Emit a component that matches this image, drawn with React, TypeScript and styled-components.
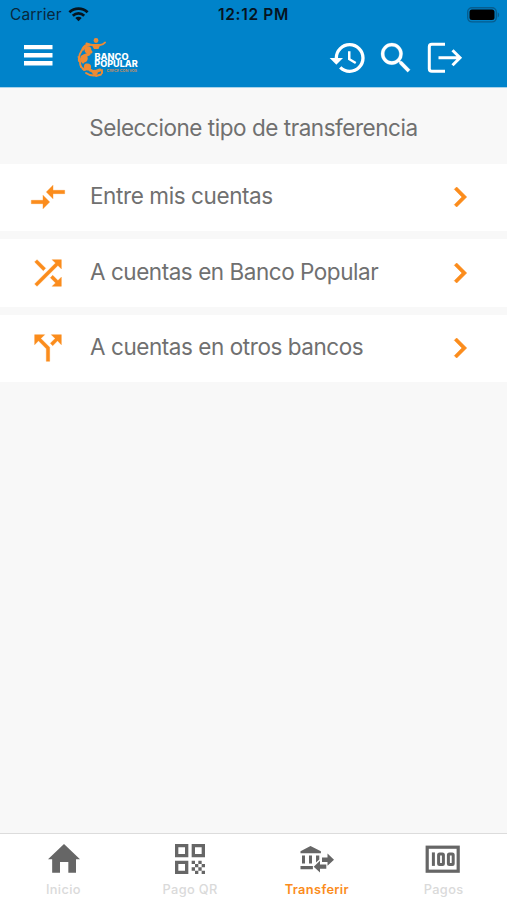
import React from "react";
import styled, { createGlobalStyle } from "styled-components";

const GlobalStyle = createGlobalStyle`
  * { box-sizing: border-box; }
  html, body { margin: 0; padding: 0; }
  body { background: #f8f8f8; font-family: Inter, "Liberation Sans", sans-serif; }
`;

const ORANGE = "#fb8c1c";

const Screen = styled.div`
  display: flex;
  flex-direction: column;
  width: 507px;
  height: 900px;
  overflow: hidden;
  background: #f8f8f8;
`;

const StatusBar = styled.div`
  display: grid;
  grid-template-columns: 1fr auto 1fr;
  align-items: center;
  height: 29px;
  padding: 0 7px 0 10px;
  background: #0083ca;
  color: #06141f;
`;

const Carrier = styled.div`
  display: flex;
  align-items: center;
  gap: 6px;
  font-size: 15.5px;
  letter-spacing: 0.13px;
  color: #08283d;
`;

const Clock = styled.div`
  margin-right: 3px;
  font-size: 15.5px;
  font-weight: 600;
  letter-spacing: 0.65px;
`;

const BatterySlot = styled.div`
  display: flex;
  justify-content: flex-end;
`;

const Header = styled.header`
  display: flex;
  align-items: center;
  height: 59px;
  padding: 0 44px 0 24px;
  background: #0083ca;
  border-bottom: 1px solid #a9d3ea;
  color: #fff;
`;

const Glyph = styled.svg`
  display: block;
  flex: none;
`;

const MenuButton = styled.div`
  padding-bottom: 6px;
`;

const Brand = styled.div`
  display: flex;
  margin-left: 23.5px;
`;

const Actions = styled.div`
  display: flex;
  align-items: center;
  gap: 8px;
  margin-left: auto;
  svg:last-child { margin-left: 3px; }
`;

const Title = styled.h1`
  margin: 0;
  height: 75.5px;
  padding-top: 5px;
  line-height: 70px;
  text-align: center;
  font-size: 22.5px;
  font-weight: 400;
  letter-spacing: -0.46px;
  color: #707070;
  white-space: nowrap;
`;

const List = styled.div`
  display: flex;
  flex-direction: column;
  gap: 8px;
`;

const Row = styled.button`
  display: flex;
  align-items: center;
  height: 67.5px;
  padding: 0 27px 0 28px;
  border: 0;
  background: #fff;
  color: ${ORANGE};
  font-family: inherit;
`;

const RowLabel = styled.span<{ $spacing: number }>`
  flex: 1;
  margin-left: 22px;
  padding-bottom: 2px;
  text-align: left;
  font-size: 22.5px;
  line-height: 28px;
  letter-spacing: ${(p) => p.$spacing}px;
  color: #707070;
  white-space: nowrap;
`;

const TabBar = styled.nav`
  display: grid;
  grid-template-columns: repeat(4, 1fr);
  height: 67px;
  margin-top: auto;
  border-top: 1.5px solid #dcdcdc;
  background: #fff;
`;

const Tab = styled.div<{ $active?: boolean }>`
  display: flex;
  flex-direction: column;
  align-items: center;
  padding-top: 5px;
  color: #666;
  span {
    margin-top: 2px;
    font-size: 12.8px;
    line-height: 18px;
    font-weight: ${(p) => (p.$active ? 600 : 500)};
    letter-spacing: 0.35px;
    color: ${(p) => (p.$active ? ORANGE : "#dadada")};
  }
`;

const Icon = ({ d, size = 40, weight = 0 }: { d: string; size?: number; weight?: number }) => (
  <Glyph
    width={size}
    height={size}
    viewBox="0 0 24 24"
    fill="currentColor"
    stroke={weight ? "currentColor" : "none"}
    strokeWidth={weight}
  >
    <path d={d} />
  </Glyph>
);

const paths = {
  history:
    "M13 3a9 9 0 0 0-9 9H1l3.89 3.89.07.14L9 12H6c0-3.87 3.13-7 7-7s7 3.13 7 7-3.13 7-7 7c-1.93 0-3.68-.79-4.94-2.06l-1.42 1.42A8.954 8.954 0 0 0 13 21a9 9 0 0 0 0-18zm-1 5v5l4.28 2.54.72-1.21-3.5-2.08V8H12z",
  search:
    "M15.5 14h-.79l-.28-.27A6.471 6.471 0 0 0 16 9.5 6.5 6.5 0 1 0 9.5 16c1.61 0 3.09-.59 4.23-1.57l.27.28v.79l5 4.99L20.49 19l-4.99-5zm-6 0C7.01 14 5 11.99 5 9.5S7.01 5 9.5 5 14 7.01 14 9.5 11.99 14 9.5 14z",
  compare:
    "M9.01 14H2v2h7.01v3L13 15l-3.99-4v3zm5.98-1v-3H22V8h-7.01V5L11 9l3.99 4z",
  shuffle:
    "M10.59 9.17 5.41 4 4 5.41l5.17 5.17 1.42-1.41zM14.5 4l2.04 2.04L4 18.59 5.41 20 17.96 7.46 20 9.5V4h-5.5zm.33 9.41-1.41 1.41 3.13 3.13L14.5 20H20v-5.5l-2.04 2.04-3.13-3.13z",
  split:
    "M14 4l2.29 2.29-2.88 2.88 1.42 1.42 2.88-2.88L20 10V4h-6zm-4 0H4v6l2.29-2.29 4.71 4.7V20h2v-8.41l-5.29-5.3L10 4z",
  chevron: "M10 6 8.59 7.41 13.17 12l-4.58 4.59L10 18l6-6z",
  home: "M10.2 20.2v-6.4h5v6.4h4.6v-8h2.4L12.6 3 3 12.2h2.5v8z",
  qr: "M3 11h8V3H3v8zm2-6h4v4H5V5zM3 21h8v-8H3v8zm2-6h4v4H5v-4zM13 3v8h8V3h-8zm6 6h-4V5h4v4zM19 19h2v2h-2zM13 13h2v2h-2zM15 15h2v2h-2zM13 17h2v2h-2zM15 19h2v2h-2zM17 17h2v2h-2zM17 13h2v2h-2zM19 15h2v2h-2z",
};

const WifiIcon = () => (
  <Glyph width="21" height="15" viewBox="0 0 21 15" fill="none" stroke="#06141f" strokeWidth="2.8">
    <path d="M1.4 5.2C6.6.4 14.4.4 19.6 5.2M4.8 8.7c3.3-3 8.1-3 11.4 0" />
    <path d="m10.5 14.2-3.2-3.3c1.9-1.6 4.5-1.6 6.4 0z" fill="#06141f" stroke="none" />
  </Glyph>
);

const BatteryIcon = () => (
  <Glyph width="33" height="16" viewBox="0 0 33 16">
    <rect x=".7" y=".7" width="28.6" height="14.2" rx="4.3" fill="none" stroke="#075d8e" strokeWidth="1.4" />
    <rect x="2.5" y="2.6" width="25" height="10.5" rx="2.5" fill="#000" />
    <path d="M30.7 5.2c1.9.7 1.9 4.5 0 5.2z" fill="#075d8e" />
  </Glyph>
);

const MenuIcon = () => (
  <Glyph width="29" height="21" viewBox="0 0 29 21" fill="#fff">
    <path d="M0 0h28.5v4.3H0zM0 8h28.5v4.4H0zM0 16h28.5v4.4H0z" />
  </Glyph>
);

const LogoutIcon = () => (
  <Glyph width="36" height="32" viewBox="0 0 36 32" fill="none" stroke="#fff" strokeWidth="3">
    <path d="M18 2.2H4.8Q2.3 2.2 2.3 4.7v22Q2.3 29.2 4.8 29.2H18M11.5 15.7h21M25.5 8.2l7.5 7.5-7.5 7.5" />
  </Glyph>
);

const BrandLogo = () => (
  <Glyph width="64" height="42" viewBox="0 0 64 42">
    <g fill="none" stroke="#ef8b34" strokeLinecap="round">
      <path d="M9.5 6.5q3 1.5 6 1.5h7.500q3 0 5-2.500" strokeWidth="2" />
      <path d="M5 13q-4 6-3 11M1.500 20l3 4M3 25q0 5 4 8M4 30l4 3M9 36q4 3 9 2.500M19 39l5-1.500M25 36v-3" strokeWidth="1.9" />
      <path d="M12 8q-4 0-6 4M11 12l3 3M7 19l5-2M7 20l-1 5M9 28l3 3M13 33l4 2M20 34l3-1" strokeWidth="3" />
    </g>
    <g fill="#ef8b34">
      <circle cx="19" cy="3.500" r="2.400" />
      <path d="M14.500 7.500h9l-2 4.500h-4.500z" />
      <circle cx="11" cy="13" r="3.400" />
      <circle cx="7" cy="21.500" r="3.700" />
      <circle cx="10.500" cy="30" r="3.600" />
      <circle cx="18" cy="35.500" r="2.700" />
    </g>
    <g fontFamily="Inter, sans-serif" fontWeight="800" fill="#fff">
      <text x="17.500" y="23.200" fontSize="8.600" textLength="34" lengthAdjust="spacingAndGlyphs">BANCO</text>
      <text x="17.300" y="30.200" fontSize="8.600" textLength="43.500" lengthAdjust="spacingAndGlyphs">POPULAR</text>
      <text x="29.500" y="35" fontSize="3.400" fontWeight="600" fill="#d59055" textLength="30.500" lengthAdjust="spacingAndGlyphs">CRECE CON VOS</text>
    </g>
  </Glyph>
);

const BankTransferIcon = () => (
  <Glyph width="40" height="40" viewBox="0 0 40 40" fill="currentColor">
    <path d="M13.5 7 3.5 12.3v2h20.4v-2zM5 16.5h3v8H5zM12 16.5h3v8h-3zM19 16.5h3.3v4L19 23.5zM3.5 27h12.4v3.2H3.5z" />
    <path d="M30.5 14.5 37 20.7l-6.5 6v-3.8H25v-4.4h5.5zM23 21.8v3.8h6.3v4.2H23v3.7l-6.3-5.8z" />
  </Glyph>
);

const CashIcon = () => (
  <Glyph width="40" height="40" viewBox="0 0 40 40" fill="none" stroke="currentColor">
    <rect x="3.2" y="8.200" width="31" height="24" strokeWidth="3.2" />
    <path d="M9.4 13.4v13.5" strokeWidth="3" />
    <rect x="14.6" y="14.9" width="4.8" height="10.6" rx="1" strokeWidth="3" />
    <rect x="24.400" y="14.9" width="4.8" height="10.6" rx="1" strokeWidth="3" />
  </Glyph>
);

const options = [
  { label: "Entre mis cuentas", icon: paths.compare, spacing: -0.4 },
  { label: "A cuentas en Banco Popular", icon: paths.shuffle, spacing: -0.46 },
  { label: "A cuentas en otros bancos", icon: paths.split, spacing: -0.44 },
];

const tabs = [
  { label: "Inicio", icon: <Icon d={paths.home} /> },
  { label: "Pago QR", icon: <Icon d={paths.qr} /> },
  { label: "Transferir", icon: <BankTransferIcon />, active: true },
  { label: "Pagos", icon: <CashIcon /> },
];

export default function App() {
  return (
    <Screen>
      <GlobalStyle />
      <StatusBar>
        <Carrier>
          Carrier
          <WifiIcon />
        </Carrier>
        <Clock>12:12 PM</Clock>
        <BatterySlot>
          <BatteryIcon />
        </BatterySlot>
      </StatusBar>
      <Header>
        <MenuButton>
          <MenuIcon />
        </MenuButton>
        <Brand>
          <BrandLogo />
        </Brand>
        <Actions>
          <Icon d={paths.history} />
          <Icon d={paths.search} weight={0.15} />
          <LogoutIcon />
        </Actions>
      </Header>
      <Title>Seleccione tipo de transferencia</Title>
      <List>
        {options.map((o) => (
          <Row key={o.label}>
            <Icon d={o.icon} weight={0.25} />
            <RowLabel $spacing={o.spacing}>{o.label}</RowLabel>
            <Icon d={paths.chevron} weight={0.35} />
          </Row>
        ))}
      </List>
      <TabBar>
        {tabs.map((t) => (
          <Tab key={t.label} $active={t.active}>
            {t.icon}
            <span>{t.label}</span>
          </Tab>
        ))}
      </TabBar>
    </Screen>
  );
}
